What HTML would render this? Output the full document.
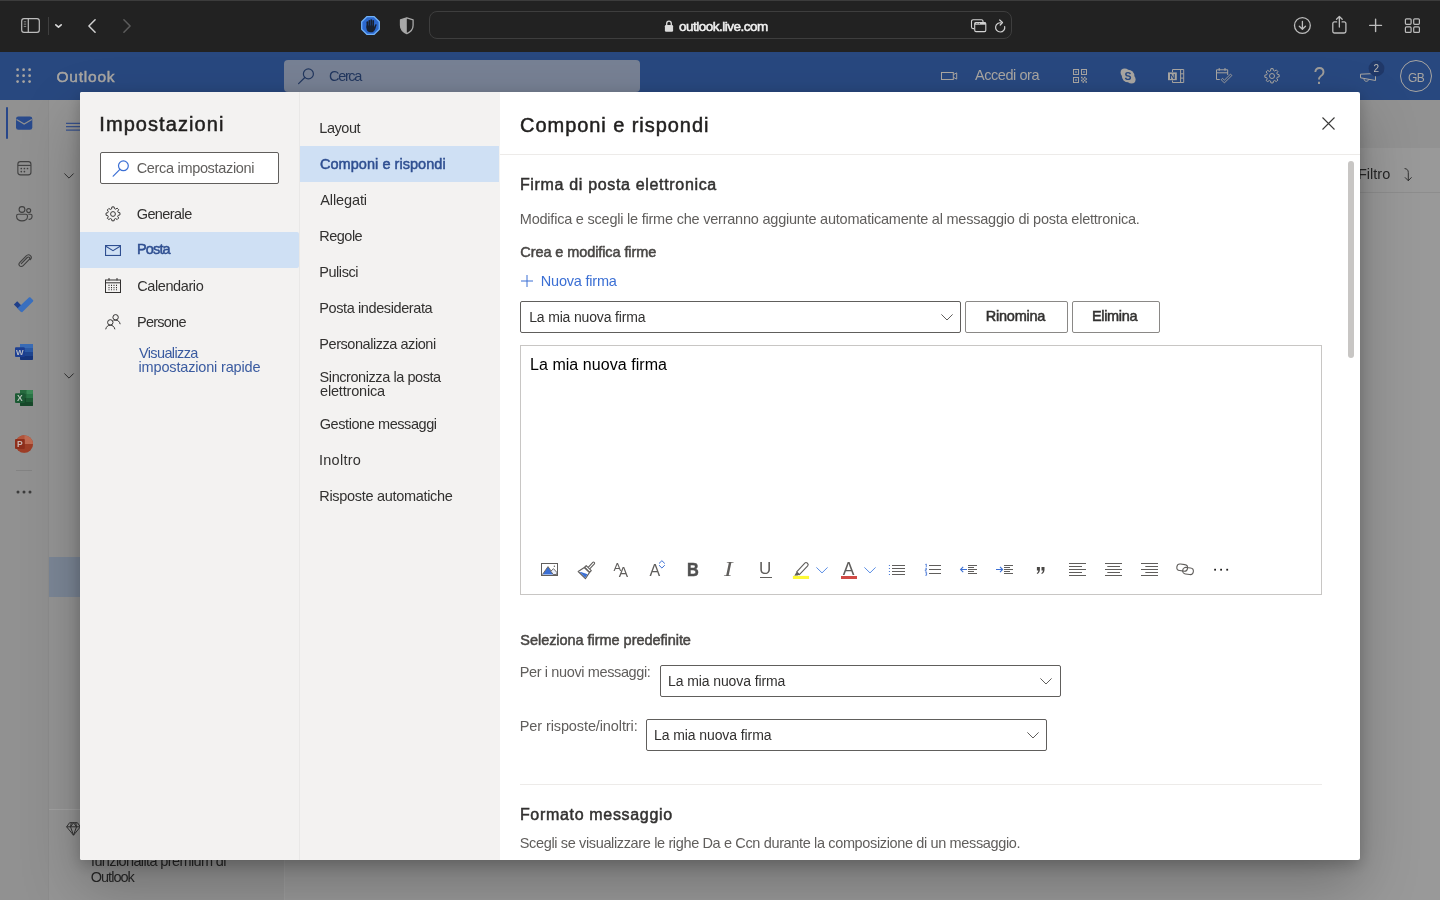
<!DOCTYPE html>
<html lang="it">
<head>
<meta charset="utf-8">
<title>Impostazioni - Outlook</title>
<style>
*{box-sizing:border-box;margin:0;padding:0}
html,body{width:1440px;height:900px;overflow:hidden;background:#999;font-family:"Liberation Sans",sans-serif;color:#201f1e}
body{position:relative}
.a{position:absolute}
svg{position:absolute;overflow:visible}
.t{position:absolute;white-space:nowrap;font-size:14.5px;line-height:20px;color:#323130}
.b{font-weight:normal;-webkit-text-stroke:0.5px}
.hd{color:#a9a6a2}
#safari{left:0;top:0;width:1440px;height:52px;background:#222}
#ohead{left:0;top:52px;width:1440px;height:48px;background:#28487f}
#osearch{left:284px;top:60px;width:356px;height:32px;background:#778194;border-radius:4px}
#rail{left:0;top:100px;width:48px;height:800px;background:#919191}
#fpane{left:48px;top:100px;width:237px;height:800px;background:#959595;border-left:1px solid #8d8d8d;border-right:1px solid #9e9e9e}
#cmdbar{left:285px;top:100px;width:1155px;height:48px;background:#929292}
#mlist{left:285px;top:148px;width:1155px;height:752px;background:#999}
#modal{left:80px;top:92px;width:1280px;height:768px;background:#fff;border-radius:2px;box-shadow:0 25.6px 57.6px rgba(0,0,0,.25),0 4.8px 14.4px rgba(0,0,0,.21)}
#p1{left:80px;top:92px;width:220px;height:768px;background:#f3f2f1;border-right:1px solid #e9e8e7;border-radius:2px 0 0 2px}
#p2{left:300px;top:92px;width:200px;height:768px;background:#f3f2f1}
.sel{background:#cfe0f4}
.box{background:#fff;border:1px solid #605e5c;border-radius:2px}
.btn{background:#fff;border:1px solid #8a8886;border-radius:2px}
</style>
</head>
<body>
<div id="root" style="position:absolute;left:0;top:0;width:1440px;height:900px;will-change:transform">
<!-- ===== SAFARI TOOLBAR ===== -->
<div class="a" id="safari"></div>
<div class="a" style="left:0;top:0;width:1440px;height:1px;background:#3c3c3c"></div>
<!-- sidebar toggle -->
<svg style="left:21px;top:18px" width="19" height="15" viewBox="0 0 19 15" fill="none" stroke="#bdbdbd" stroke-width="1.200"><rect x=".7" y=".7" width="17.600" height="13.600" rx="2.300"/><path d="M7.300 .8V14.200"/><path d="M2.800 3.800H5.200M2.800 6.100H5.200M2.800 8.400H5.200" stroke-width="1" stroke="#8e8e8e"/></svg>
<div class="a" style="left:48px;top:17px;width:1px;height:18px;background:#3f3f3f"></div>
<svg style="left:55px;top:24px" width="7" height="4" viewBox="0 0 7 4" fill="none" stroke="#dadada" stroke-width="1.600" stroke-linecap="round" stroke-linejoin="round"><path d="M.8 .8L3.500 3.200L6.200 .8"/></svg>
<svg style="left:88px;top:19px" width="8" height="14" viewBox="0 0 8 14" fill="none" stroke="#d0d0d0" stroke-width="1.500" stroke-linecap="round" stroke-linejoin="round"><path d="M7.100 .8L.9 7L7.100 13.200"/></svg>
<svg style="left:123px;top:19px" width="8" height="14" viewBox="0 0 8 14" fill="none" stroke="#5c5c5c" stroke-width="1.500" stroke-linecap="round" stroke-linejoin="round"><path d="M.9 .8L7.100 7L.9 13.200"/></svg>
<!-- adblock hand -->
<svg style="left:361px;top:16px" width="19" height="19" viewBox="0 0 19 19"><path d="M5.800 .7H13.200L18.300 5.800V13.200L13.200 18.300H5.800L.7 13.200V5.800Z" fill="#2c69cf" stroke="#6fb0f8" stroke-width="1.300" stroke-linejoin="round"/><g fill="#18202e"><rect x="5.500" y="5.300" width="1.700" height="7" rx=".85"/><rect x="7.450" y="3.900" width="1.700" height="8" rx=".85"/><rect x="9.400" y="3.200" width="1.700" height="8" rx=".85"/><rect x="11.350" y="4.100" width="1.700" height="8" rx=".85"/><path d="M5.500 9.600H13.050V11.300L14.300 8.600C14.700 7.700 15.900 8.200 15.600 9.100L14.300 12.900C13.600 14.900 12.100 16.300 9.700 16.300 7.200 16.300 5.500 14.700 5.500 12.400Z"/></g></svg>
<!-- shield -->
<svg style="left:399px;top:17px" width="15" height="18" viewBox="0 0 15 18"><path d="M7.800 .8L14.100 2.900V8.300C14.100 12.300 11.600 15 7.800 16.700 4 15 1.500 12.300 1.500 8.300V2.900Z" fill="none" stroke="#a8a8a8" stroke-width="1.300" stroke-linejoin="round"/><path d="M7.800 .8L1.500 2.900V8.300C1.500 12.300 4 15 7.800 16.700Z" fill="#a8a8a8"/></svg>
<!-- url field -->
<div class="a" style="left:429px;top:11px;width:583px;height:28px;border:1px solid #3e3e3e;border-radius:8px"></div>
<svg style="left:664px;top:20px" width="10" height="12" viewBox="0 0 10 12"><rect x=".9" y="5" width="8.200" height="6.800" rx="1.200" fill="#dcdcdc"/><path d="M2.700 5.500V3.500a2.300 2.300 0 0 1 4.600 0V5.500" fill="none" stroke="#dcdcdc" stroke-width="1.300"/></svg>
<div class="t b" id="u1" style="left:679px;top:17px;font-size:13.5px;color:#f2f2f2;letter-spacing:-0.5px">outlook.live.com</div>
<svg style="left:970px;top:19px" width="17" height="14" viewBox="0 0 17 14" fill="none" stroke="#d2d2d2" stroke-width="1.100"><path d="M4 9.600H3A1.500 1.500 0 0 1 1.500 8.100V2.300A1.500 1.500 0 0 1 3 .8H11.500A1.500 1.500 0 0 1 13 2.300V3"/><rect x="4.700" y="3.500" width="11.100" height="9.100" rx="1.300"/><path d="M4.700 4.600H15.800" stroke-width="2.200"/><path d="M6.300 4.500h.01M7.900 4.500h.01M9.500 4.500h.01" stroke="#555" stroke-width="1" stroke-linecap="round"/></svg>
<svg style="left:993px;top:19px" width="14" height="15" viewBox="0 0 14 15" fill="none" stroke="#d2d2d2" stroke-width="1.200" stroke-linecap="round" stroke-linejoin="round"><path d="M11.700 7.500A4.600 4.600 0 1 1 8.600 4"/><path d="M6.700 1L9.500 3.500L7.200 6"/></svg>
<!-- right controls -->
<svg style="left:1293px;top:16px" width="19" height="19" viewBox="0 0 19 19" fill="none" stroke="#bcbcbc" stroke-width="1.300" stroke-linecap="round" stroke-linejoin="round"><circle cx="9.400" cy="9.500" r="7.900"/><path d="M9.400 5.500V13.200M6.300 10.200L9.400 13.300L12.500 10.200"/></svg>
<svg style="left:1331px;top:14px" width="17" height="21" viewBox="0 0 17 21" fill="none" stroke="#bcbcbc" stroke-width="1.300" stroke-linecap="round" stroke-linejoin="round"><path d="M5.600 7.900H3.500A1.700 1.700 0 0 0 1.800 9.600V17.300A1.700 1.700 0 0 0 3.500 19H13.200A1.700 1.700 0 0 0 14.900 17.300V9.600A1.700 1.700 0 0 0 13.200 7.900H11.100"/><path d="M8.350 13V2.700M5.500 5.300L8.350 2.500L11.200 5.300"/></svg>
<svg style="left:1369px;top:18px" width="14" height="15" viewBox="0 0 14 15" fill="none" stroke="#bcbcbc" stroke-width="1.400" stroke-linecap="round"><path d="M6.600 1.200V13.600M.7 7.400H12.500"/></svg>
<svg style="left:1404px;top:18px" width="17" height="16" viewBox="0 0 17 16" fill="none" stroke="#bcbcbc" stroke-width="1.200"><rect x="1.400" y=".8" width="5.700" height="5.500" rx="1"/><rect x="9.700" y=".8" width="5.700" height="5.500" rx="1"/><rect x="1.400" y="8.900" width="5.700" height="5.500" rx="1"/><rect x="9.700" y="8.900" width="5.700" height="5.500" rx="1"/></svg>
<!--SAFARI-->
<!-- ===== OUTLOOK HEADER ===== -->
<div class="a" id="ohead"></div>
<div class="a" id="osearch"></div>
<!-- waffle -->
<svg style="left:16px;top:68px" width="16" height="16" viewBox="0 0 16 16" fill="#a9a6a2"><circle cx="1.600" cy="1.700" r="1.350"/><circle cx="7.600" cy="1.700" r="1.350"/><circle cx="13.600" cy="1.700" r="1.350"/><circle cx="1.600" cy="7.700" r="1.350"/><circle cx="7.600" cy="7.700" r="1.350"/><circle cx="13.600" cy="7.700" r="1.350"/><circle cx="1.600" cy="13.600" r="1.350"/><circle cx="7.600" cy="13.600" r="1.350"/><circle cx="13.600" cy="13.600" r="1.350"/></svg>
<div class="t b hd" id="h1" style="left:56.4px;top:67px;font-size:15.5px;letter-spacing:0.8px">Outlook</div>
<svg style="left:298px;top:68px" width="17" height="17" viewBox="0 0 17 17" fill="none" stroke="#22375f" stroke-width="1.200"><circle cx="10.400" cy="5.900" r="5"/><path d="M6.800 9.500L.6 15.700" stroke-linecap="round"/></svg>
<div class="t" id="h2" style="left:329px;top:66px;color:#22375f;letter-spacing:-1.33px">Cerca</div>
<!-- meet now -->
<svg style="left:941px;top:72px" width="17" height="8" viewBox="0 0 17 8" fill="none" stroke="#a9a6a2" stroke-width="1"><rect x=".5" y=".5" width="11.800" height="7"/><path d="M12.300 2.700L15.700 .9V7.100L12.300 5.300"/></svg>
<div class="t hd" id="h3" style="left:975px;top:65px;letter-spacing:-0.45px">Accedi ora</div>
<!-- qr -->
<svg style="left:1073px;top:69px" width="14" height="14" viewBox="0 0 14 14" fill="none" stroke="#a9a6a2" stroke-width="1"><rect x=".5" y=".5" width="5" height="5"/><rect x="8.500" y=".5" width="5" height="5"/><rect x=".5" y="8.500" width="5" height="5"/><path d="M2.300 3h1.400M10.300 3h1.400M2.300 11h1.400" stroke-width="1.400"/><path d="M8 8.500h1.500M11 8.500h1.500M9.500 10h1.500M12.500 10H14M8 11.500h1.500M11 11.500h1.500M9.500 13h1.500M12.500 13H14" stroke-width="1.300"/></svg>
<!-- skype -->
<svg style="left:1120px;top:68px" width="16" height="16" viewBox="0 0 16 16"><g fill="#a9a6a2"><circle cx="8.100" cy="8" r="6.300"/><circle cx="4.700" cy="4.500" r="4.100"/><circle cx="11.500" cy="11.500" r="4.100"/></g><text x="8.100" y="11.700" text-anchor="middle" font-family="Liberation Sans, sans-serif" font-weight="bold" font-size="10.500" fill="#28487f">S</text></svg>
<!-- onenote -->
<svg style="left:1168px;top:69px" width="17" height="14" viewBox="0 0 17 14"><path d="M4.500 3V.5H15.700V13.500H4.500V11.500" fill="none" stroke="#a9a6a2" stroke-width="1"/><path d="M12.600 .5V13.500M12.600 4.800H15.700M12.600 9.100H15.700" fill="none" stroke="#a9a6a2" stroke-width="1"/><rect x="0" y="3.400" width="8.800" height="7.800" fill="#a9a6a2"/><text x="4.400" y="10.200" text-anchor="middle" font-family="Liberation Sans, sans-serif" font-weight="bold" font-size="8" fill="#28487f">N</text></svg>
<!-- my day -->
<svg style="left:1216px;top:68px" width="17" height="16" viewBox="0 0 17 16" fill="none" stroke="#a9a6a2" stroke-width="1"><path d="M3.800 11.500H.5V1.800H11.700V7"/><path d="M.5 4.800H11.700M3.200 0V2.800M9 0V2.800"/><path d="M5.200 11.700L8.400 14.900L15.900 7.500L14.500 6.100L8.400 12.200L6.600 10.300Z" stroke-linejoin="round" stroke-width=".9"/></svg>
<!-- settings gear -->
<svg style="left:1264px;top:68px" width="16" height="16" viewBox="0 0 16 16" fill="none" stroke="#a9a6a2" stroke-width="1"><circle cx="8" cy="8" r="2.500"/><path d="M6.900 .6h2.200l.35 1.900 1.250.52 1.600-1.100 1.550 1.550-1.100 1.600.52 1.250 1.900.35v2.200l-1.900.35-.52 1.250 1.100 1.600-1.550 1.550-1.600-1.100-1.250.52-.35 1.900H6.900l-.35-1.900-1.250-.52-1.600 1.100L2.150 12.500l1.100-1.600-.52-1.250L.83 9.300V7.100l1.900-.35.52-1.250-1.100-1.600L3.700 2.350l1.600 1.100 1.250-.52z" stroke-linejoin="round"/></svg>
<!-- help -->
<div class="t hd" id="h4" style="left:1313.5px;top:65px;font-size:21px;line-height:26px;transform:scaleY(1.1);transform-origin:0 100%;color:#9f9d9a">?</div>
<!-- whats new -->
<svg style="left:1360px;top:73px" width="16" height="9" viewBox="0 0 16 9" fill="none" stroke="#a9a6a2" stroke-width="1" stroke-linejoin="round"><path d="M.5 1.200L15.500 .5V7.500L.5 4.800Z"/><path d="M4 5.600C4 7.300 5 8.300 6.300 8.300S8.500 7.500 8.600 6.500"/></svg>
<svg style="left:1367.5px;top:59.5px" width="17" height="17" viewBox="0 0 17 17"><circle cx="8.500" cy="8.500" r="7.900" fill="#203868"/><text x="8.400" y="11.700" text-anchor="middle" font-family="Liberation Sans, sans-serif" font-size="10" fill="#bdbab6">2</text></svg>
<!-- avatar -->
<div class="a" style="left:1400px;top:60px;width:32px;height:32px;border:1px solid #a9a6a2;border-radius:16px"></div>
<div class="t hd" id="h5" style="left:1408px;top:67.5px;font-size:12px;letter-spacing:-0.7px">GB</div>
<!--OHEAD-->
<!-- ===== DIMMED APP BACKGROUND ===== -->
<div class="a" id="rail"></div>
<div class="a" id="fpane"></div>
<div class="a" id="cmdbar"></div>
<div class="a" id="mlist"></div>
<!-- rail icons -->
<div class="a" style="left:6px;top:107px;width:2px;height:32px;background:#28478a;border-radius:1px"></div>
<svg style="left:16px;top:115.5px" width="17" height="14" viewBox="0 0 17 14"><rect x="0" y=".6" width="16.300" height="13.200" rx="2.400" fill="#294a8c"/><path d="M.5 3.600L8.150 8L15.800 3.600" fill="none" stroke="#919191" stroke-width="1.200"/></svg>
<svg style="left:17px;top:161px" width="15" height="15" viewBox="0 0 15 15" fill="none" stroke="#414141" stroke-width="1.100"><rect x=".85" y=".6" width="13.100" height="13.300" rx="2.600"/><path d="M.9 4.400H13.900"/><g fill="#414141" stroke="none"><circle cx="4.300" cy="7.500" r=".85"/><circle cx="7.400" cy="7.500" r=".85"/><circle cx="10.500" cy="7.500" r=".85"/><circle cx="4.300" cy="10.600" r=".85"/><circle cx="7.400" cy="10.600" r=".85"/></g></svg>
<svg style="left:16px;top:206px" width="17" height="16" viewBox="0 0 17 16" fill="none" stroke="#414141" stroke-width="1.100"><circle cx="6" cy="3.500" r="2.900"/><circle cx="12.700" cy="4.600" r="2"/><path d="M2.200 8.300H9.800C10.800 8.300 11.500 9 11.500 10V10.600C11.500 13.300 9 14.900 6 14.900S.6 13.300 .6 10.600V10C.6 9 1.300 8.300 2.200 8.300Z"/><path d="M12.300 8.300H14.500C15.400 8.300 16.100 9 16.100 9.900 16.100 12 14.800 13.400 12.600 13.400"/></svg>
<svg style="left:17px;top:252px" width="15" height="16" viewBox="0 0 15 16" fill="none" stroke="#414141" stroke-width="1.100" stroke-linecap="round"><path d="M4.300 11.600L10.300 5.500C11.800 4 13.700 6 12.300 7.400L6.200 13.600C3.700 16.100 .4 12.800 2.900 10.300L9 4.100C12.200 .9 16 4.700 13.300 7.700"/></svg>
<svg style="left:13px;top:297px" width="22" height="16" viewBox="0 0 22 16"><path d="M.9 7.600L4.200 4.300L11.100 11.200L7.800 14.500Z" fill="#1f3f8a"/><path d="M7.800 14.500L4.600 11.300L15.900 .5C16.400 0 17 0 17.500 .5L20 3C20.400 3.500 20.400 4.100 20 4.500L9.400 15.100C8.900 15.600 8.300 15.300 7.800 14.500Z" fill="#3a70c0"/></svg>
<!-- word -->
<svg style="left:15px;top:344px" width="18" height="16" viewBox="0 0 18 16"><rect x="5" y="0" width="13" height="4" fill="#3a6cb6"/><rect x="5" y="4" width="13" height="4" fill="#2c5aa6"/><rect x="5" y="8" width="13" height="4" fill="#1f4590"/><path d="M5 12H18V15C18 15.600 17.600 16 17 16H6C5.400 16 5 15.600 5 15Z" fill="#16357c"/><path d="M5 0H17C17.600 0 18 .4 18 1V4H5Z" fill="#3a6cb6"/><rect x="0" y="3.200" width="9.800" height="9.800" rx="1" fill="#1d3f92"/><text x="4.900" y="11.100" text-anchor="middle" font-family="Liberation Sans, sans-serif" font-weight="bold" font-size="8" fill="#b9bdc6">W</text></svg>
<!-- excel -->
<svg style="left:15px;top:390px" width="18" height="16" viewBox="0 0 18 16"><path d="M6 0H17C17.600 0 18 .4 18 1V15C18 15.600 17.600 16 17 16H6C5.400 16 5 15.600 5 15V1C5 .4 5.400 0 6 0Z" fill="#2d6f43"/><rect x="5" y="0" width="6.500" height="4" fill="#276b3f"/><rect x="11.500" y="0" width="6.500" height="4" rx=".8" fill="#3c8a57"/><rect x="5" y="4" width="6.500" height="4" fill="#1f5c35"/><rect x="11.500" y="4" width="6.500" height="4" fill="#2b7546"/><rect x="5" y="8" width="6.500" height="4" fill="#17482a"/><rect x="11.500" y="8" width="6.500" height="4" fill="#1f5c35"/><rect x="5" y="12" width="13" height="4" rx=".8" fill="#17482a"/><rect x="0" y="3.200" width="9.800" height="9.800" rx="1" fill="#1c5a34"/><text x="4.900" y="11.100" text-anchor="middle" font-family="Liberation Sans, sans-serif" font-weight="bold" font-size="8.500" fill="#b9c4bc">X</text></svg>
<!-- powerpoint -->
<svg style="left:15px;top:435px" width="18" height="18" viewBox="0 0 18 18"><circle cx="9.200" cy="9" r="8.800" fill="#a5442c"/><path d="M9.200 .2A8.800 8.800 0 0 1 18 9H9.200Z" fill="#bd6a52"/><path d="M9.200 .2A8.800 8.800 0 0 0 1.400 5H9.200Z" fill="#b2553c"/><path d="M.4 9H18A8.800 8.800 0 0 1 .4 9Z" fill="#9a3a24" opacity=".6"/><rect x="0" y="4.100" width="9.800" height="9.800" rx="1" fill="#8e2f1c"/><text x="4.900" y="12" text-anchor="middle" font-family="Liberation Sans, sans-serif" font-weight="bold" font-size="8.500" fill="#c9b8b3">P</text></svg>
<div class="a" style="left:16px;top:470px;width:16px;height:1px;background:#838383"></div>
<svg style="left:16px;top:490px" width="16" height="4" viewBox="0 0 16 4" fill="#3c3c3c"><circle cx="2" cy="2" r="1.500"/><circle cx="8" cy="2" r="1.500"/><circle cx="14" cy="2" r="1.500"/></svg>
<!-- folder pane -->
<svg style="left:66px;top:122px" width="16" height="10" viewBox="0 0 16 10" fill="none" stroke="#39538f" stroke-width="1.200"><path d="M0 1.300H16M0 4.700H16M0 8.100H16"/></svg>
<svg style="left:64px;top:173px" width="10" height="6" viewBox="0 0 10 6" fill="none" stroke="#333" stroke-width="1"><path d="M.4 .5L5 5.100L9.600 .5"/></svg>
<svg style="left:64px;top:373px" width="10" height="6" viewBox="0 0 10 6" fill="none" stroke="#333" stroke-width="1"><path d="M.4 .5L5 5.100L9.600 .5"/></svg>
<div class="a" style="left:49px;top:557px;width:236px;height:40px;background:#7c8797"></div>
<div class="a" style="left:49px;top:809px;width:235px;height:1px;background:#a2a2a2"></div>
<svg style="left:66px;top:822px" width="15" height="14" viewBox="0 0 15 14" fill="none" stroke="#333" stroke-width="1" stroke-linejoin="round"><path d="M3.600 .7H11.400L14.400 4.800L7.500 13.200L.6 4.800Z"/><path d="M.6 4.800H14.400M5.300 .7L4.500 4.800L7.500 13.200L10.500 4.800L9.700 .7M7.500 .7L4.500 4.800M7.500 .7L10.500 4.800"/></svg>
<div class="t" id="g1" style="left:91px;top:853px;color:#262626;line-height:16px;letter-spacing:-0.62px">funzionalità premium di</div>
<div class="t" id="g2" style="left:90.7px;top:869px;color:#262626;line-height:16px;letter-spacing:-0.97px">Outlook</div>
<!-- message list -->
<div class="a" style="left:285px;top:192px;width:1155px;height:1px;background:#8d8d8d"></div>
<div class="t" id="g3" style="left:1358px;top:164px;color:#262626">Filtro</div>
<svg style="left:1403px;top:168px" width="9" height="14" viewBox="0 0 9 14" fill="none" stroke="#303030" stroke-width="1" stroke-linecap="round" stroke-linejoin="round"><path d="M2 .6C4 .8 5.300 2 5.300 4.500V12.600M2.200 9.600L5.300 12.700L8.300 9.600"/></svg>
<!--BG-->
<!-- ===== SETTINGS MODAL ===== -->
<div class="a" id="modal"></div>
<div class="a" id="p1"></div>
<div class="a" id="p2"></div>
<!-- left pane -->
<div class="t b" id="t1" style="left:99.3px;top:110px;font-size:20px;line-height:28px;color:#201f1e;letter-spacing:1.07px">Impostazioni</div>
<div class="a box" style="left:100px;top:152px;width:179px;height:32px"></div>
<svg style="left:112px;top:160px" width="17" height="17" viewBox="0 0 17 17" fill="none" stroke="#3b6fd4" stroke-width="1.2"><circle cx="11.4" cy="5.8" r="4.9"/><path d="M7.9 9.4L1.2 16.2" stroke-linecap="round"/></svg>
<div class="t" id="t2" style="left:136.7px;top:158px;color:#605e5c;letter-spacing:-0.32px">Cerca impostazioni</div>
<svg style="left:105px;top:206px" width="16" height="16" viewBox="0 0 16 16" fill="none" stroke="#3b3a39" stroke-width="1"><circle cx="8" cy="8" r="2.4"/><path d="M6.9 .9h2.2l.35 1.75 1.2.5 1.5-1 1.55 1.55-1 1.5.5 1.2 1.75.35v2.2l-1.75.35-.5 1.2 1 1.5-1.55 1.55-1.5-1-1.2.5-.35 1.75H6.9l-.35-1.75-1.2-.5-1.5 1L2.3 12.3l1-1.5-.5-1.2L1.05 9.250V7.05L2.800 6.700l.5-1.200-1-1.5L3.850 2.450l1.500 1 1.200-.5z" stroke-linejoin="round"/></svg>
<div class="t" id="t3" style="left:136.7px;top:204px;letter-spacing:-0.58px">Generale</div>
<div class="a sel" style="left:80px;top:232px;width:219px;height:36px;border-radius:0 2px 2px 0"></div>
<svg style="left:105px;top:245px" width="16" height="11" viewBox="0 0 16 11" fill="none" stroke="#2f4f91" stroke-width="1.1"><rect x=".55" y=".55" width="14.9" height="9.9"/><path d="M.8 1.2L8 5.600L15.2 1.200"/></svg>
<div class="t b" id="t4" style="left:137px;top:239px;color:#2f4f91;letter-spacing:-0.85px">Posta</div>
<svg style="left:105px;top:278px" width="16" height="15" viewBox="0 0 16 15" fill="none" stroke="#323130" stroke-width="1"><rect x=".5" y="2" width="15" height="12.500"/><path d="M.5 4.800H15.5M4 0V2.500M12 0V2.500" /><path d="M3.500 7.400h1M6 7.400h1M8.500 7.400h1M11 7.400h1M3.500 9.600h1M6 9.600h1M8.500 9.600h1M11 9.600h1M3.500 11.800h1M6 11.800h1M8.500 11.800h1M11 11.800h1" stroke-width="1.1"/></svg>
<div class="t" id="t5" style="left:137.2px;top:276px;letter-spacing:-0.4px">Calendario</div>
<svg style="left:105px;top:314px" width="16" height="16" viewBox="0 0 16 16" fill="none" stroke="#323130" stroke-width="1"><circle cx="10.600" cy="3.300" r="2.700"/><circle cx="5.300" cy="8.400" r="2.700"/><path d="M.700 15.300C1.300 12.600 3 11.200 5.300 11.200S9.300 12.600 9.900 15.300M8.500 6.700C9.200 6.300 9.900 6.100 10.600 6.100 12.900 6.100 14.600 7.500 15.200 10.200"/></svg>
<div class="t" id="t6" style="left:137px;top:312px;letter-spacing:-0.76px">Persone</div>
<div class="t" id="t7" style="left:138.9px;top:346px;line-height:14px;color:#3a5ba0;letter-spacing:-0.61px">Visualizza</div>
<div class="t" id="t8" style="left:138.5px;top:360px;line-height:14px;color:#3a5ba0;letter-spacing:-0.16px">impostazioni rapide</div>
<!--P1-->
<!-- middle pane -->
<div class="a sel" style="left:300px;top:146px;width:199px;height:36px"></div>
<div class="t" id="t9" style="left:319.3px;top:118px;letter-spacing:-0.45px">Layout</div>
<div class="t b" id="t10" style="left:320px;top:154px;color:#2f4f91;letter-spacing:0.04px">Componi e rispondi</div>
<div class="t" id="t11" style="left:320.3px;top:190px;letter-spacing:-0.11px">Allegati</div>
<div class="t" id="t12" style="left:319.3px;top:226px;letter-spacing:-0.52px">Regole</div>
<div class="t" id="t13" style="left:319.3px;top:262px;letter-spacing:-0.46px">Pulisci</div>
<div class="t" id="t14" style="left:319.3px;top:298px;letter-spacing:-0.4px">Posta indesiderata</div>
<div class="t" id="t15" style="left:319.3px;top:334px;letter-spacing:-0.45px">Personalizza azioni</div>
<div class="t" id="t16" style="left:319.6px;top:370px;line-height:14px;letter-spacing:-0.43px">Sincronizza la posta</div>
<div class="t" id="t17" style="left:320px;top:384px;line-height:14px;letter-spacing:-0.18px">elettronica</div>
<div class="t" id="t18" style="left:319.7px;top:414px;letter-spacing:-0.42px">Gestione messaggi</div>
<div class="t" id="t19" style="left:319px;top:450px;letter-spacing:0.26px">Inoltro</div>
<div class="t" id="t20" style="left:319.3px;top:486px;letter-spacing:-0.31px">Risposte automatiche</div>
<!--P2-->
<!-- right pane -->
<div class="t b" id="t21" style="left:520.1px;top:111px;font-size:20px;line-height:28px;color:#201f1e;letter-spacing:0.94px">Componi e rispondi</div>
<svg style="left:1321.5px;top:116.5px" width="13" height="13" viewBox="0 0 13 13" fill="none" stroke="#3b3a39" stroke-width="1.1"><path d="M.5 .5L12.500 12.500M12.500 .5L.5 12.500"/></svg>
<div class="a" style="left:500px;top:154px;width:860px;height:1px;background:#edebe9"></div>
<div class="a" style="left:1348px;top:161px;width:6px;height:197px;background:#c8c6c4;border-radius:3px"></div>
<div class="t b" id="t22" style="left:519.9px;top:174px;font-size:16px;line-height:22px;color:#323130;letter-spacing:0.67px">Firma di posta elettronica</div>
<div class="t" id="t23" style="left:519.8px;top:209px;color:#605e5c;letter-spacing:-0.22px">Modifica e scegli le firme che verranno aggiunte automaticamente al messaggio di posta elettronica.</div>
<div class="t b" id="t24" style="left:520.3px;top:242px;color:#484644;letter-spacing:-0.09px">Crea e modifica firme</div>
<svg style="left:521px;top:275px" width="12" height="12" viewBox="0 0 12 12" fill="none" stroke="#3b6fd4" stroke-width="1"><path d="M6 0V12M0 6H12"/></svg>
<div class="t" id="t25" style="left:540.8px;top:271px;color:#3b6fd4;letter-spacing:-0.21px">Nuova firma</div>
<div class="a box" style="left:520px;top:301px;width:441px;height:32px"></div>
<div class="t" id="t26" style="left:529.2px;top:307px;font-size:14px;letter-spacing:-0.16px">La mia nuova firma</div>
<svg style="left:941px;top:314px" width="12" height="7" viewBox="0 0 12 7" fill="none" stroke="#605e5c" stroke-width="1"><path d="M.4 .4L6 6L11.600 .4"/></svg>
<div class="a btn" style="left:965px;top:301px;width:103px;height:32px"></div>
<div class="t b" id="t27" style="left:985.7px;top:306px;letter-spacing:-0.22px">Rinomina</div>
<div class="a btn" style="left:1072px;top:301px;width:88px;height:32px"></div>
<div class="t b" id="t28" style="left:1092px;top:306px;letter-spacing:-0.34px">Elimina</div>
<div class="a" style="left:520px;top:345px;width:802px;height:250px;border:1px solid #c8c6c4;background:#fff"></div>
<div class="t" id="t29" style="left:530px;top:355px;font-size:16px;color:#000;letter-spacing:0.05px">La mia nuova firma</div>
<!-- editor toolbar -->
<svg style="left:541px;top:563px" width="17" height="13" viewBox="0 0 17 13"><rect x=".5" y=".5" width="16" height="12" fill="#fff" stroke="#605e5c" stroke-width="1"/><path d="M1.500 11.500L7 3.800L12.400 11.500Z" fill="#3b6fd4"/><path d="M1.300 11.700L7 3.600L10 7.900" fill="none" stroke="#605e5c" stroke-width=".9"/><path d="M9.800 8.200L12.500 5.700L15.800 9.300V11.500H12.200Z" fill="#e9eefb" stroke="#605e5c" stroke-width=".9" stroke-linejoin="round"/><circle cx="13.400" cy="3.300" r=".7" fill="#605e5c"/></svg>
<svg style="left:577px;top:561px" width="19" height="19" viewBox="0 0 19 19" fill="none" stroke="#605e5c" stroke-width="1.100" stroke-linejoin="round"><path d="M11.200 6.300L15.800 1.300C16.700 .5 18.200 1.900 17.400 2.900L12.700 7.800"/><path d="M9.200 4.600L14.300 9.700L12.700 11.300L7.600 6.200Z" fill="#fff"/><path d="M7.300 6.500L12.400 11.600L8.400 17.700L1.200 10.500Z" fill="#fff"/><path d="M4 10.900L10.600 13.300L8.300 16.700L2.700 11.100Z" fill="#3b6fd4" stroke="none"/></svg>
<div class="t" style="left:613.5px;top:557px;font-size:11.500px;color:#605e5c">A</div>
<div class="t" style="left:618.800px;top:561.500px;font-size:14px;color:#605e5c">A</div>
<div class="t" style="left:649.600px;top:561px;font-size:16px;color:#605e5c">A</div>
<svg style="left:658px;top:560px" width="8" height="9" viewBox="0 0 8 9" fill="none" stroke="#3b6fd4" stroke-width="1"><path d="M1 3.500L3.900 .7L6.800 3.500M1 5.200L3.900 8L6.800 5.200"/></svg>
<div class="t b" style="left:686.8px;top:557.5px;font-size:19px;line-height:24px;color:#505050;font-weight:bold;transform:scaleX(.86);transform-origin:0 0">B</div>
<div class="t" style="left:724px;top:556px;font-size:20px;line-height:26px;font-family:'Liberation Serif',serif;font-style:italic;transform:scaleX(1.3);transform-origin:0 0;color:#605e5c">I</div>
<div class="t" style="left:759px;top:557px;font-size:17px;line-height:24px;color:#605e5c">U</div>
<div class="a" style="left:760px;top:577px;width:11.500px;height:1px;background:#605e5c"></div>
<svg style="left:792px;top:561px" width="18" height="19" viewBox="0 0 18 19"><path d="M4.700 10.900L12.800 2.100C14.400 .5 17.300 3.200 15.700 4.900L7.400 13.600Z" fill="#fff" stroke="#605e5c" stroke-width="1.100" stroke-linejoin="round"/><path d="M4.700 10.900L7.400 13.600L5.800 14.500L2.300 14.700L3.600 12.500Z" fill="#605e5c"/><rect x=".9" y="14.900" width="16.200" height="3.100" fill="#fdf935"/></svg>
<svg style="left:816px;top:567px" width="12" height="7" viewBox="0 0 12 7" fill="none" stroke="#5a8ee6" stroke-width="1"><path d="M.4 .4L6 5.900L11.600 .4"/></svg>
<div class="t" style="left:842.800px;top:557px;font-size:17.500px;line-height:24px;color:#605e5c">A</div>
<div class="a" style="left:841px;top:576px;width:16px;height:3px;background:#d04a45"></div>
<svg style="left:864px;top:567px" width="12" height="7" viewBox="0 0 12 7" fill="none" stroke="#5a8ee6" stroke-width="1"><path d="M.4 .4L6 5.900L11.600 .4"/></svg>
<!-- bullets -->
<svg style="left:888px;top:564px" width="18" height="12" viewBox="0 0 18 12" fill="none" stroke="#605e5c" stroke-width="1"><path d="M4 1.500H17M4 4.500H17M4 7.500H17M4 10.500H17"/><path d="M.9 1.500h1M.9 4.500h1M.9 7.500h1M.9 10.500h1" stroke="#3b6fd4"/></svg>
<!-- numbering -->
<svg style="left:924px;top:563px" width="18" height="13" viewBox="0 0 18 13" fill="none" stroke="#605e5c" stroke-width="1"><path d="M5 2.500H17M5 6.500H17M5 10.500H17"/><path d="M1.300 1.500L2.300 1V4.200M1.300 5.300H2.500V6.700H1.300V8.100H2.700M1.300 9.300H2.600V10.800H1.700M2.600 10.800V12.300H1.300" stroke="#3b6fd4" stroke-width=".8"/></svg>
<!-- outdent -->
<svg style="left:960px;top:564px" width="18" height="12" viewBox="0 0 18 12" fill="none" stroke="#605e5c" stroke-width="1"><path d="M8 1.500H17M8 3.500H14M8 5.500H17M8 7.500H14M8 9.500H17"/><path d="M7 5.500H.6M3.200 2.900L.6 5.500L3.200 8.100" stroke="#3b6fd4" stroke-width="1.100"/></svg>
<!-- indent -->
<svg style="left:996px;top:564px" width="18" height="12" viewBox="0 0 18 12" fill="none" stroke="#605e5c" stroke-width="1"><path d="M8 1.500H17M8 3.500H14M8 5.500H17M8 7.500H14M8 9.500H17"/><path d="M0 5.500H6.600M4 2.900L6.600 5.500L4 8.100" stroke="#3b6fd4" stroke-width="1.100"/></svg>
<!-- quote -->
<svg style="left:1036px;top:567px" width="10" height="8" viewBox="0 0 10 8" fill="#484644"><path d="M.9 .1H3.900V2.600C3.900 4.900 3.100 6.200 1.200 6.900L.7 6C1.700 5.500 2.200 4.700 2.300 3.400H.9Z"/><path d="M5.500 .1H8.500V2.600C8.500 4.900 7.700 6.200 5.800 6.900L5.300 6C6.300 5.500 6.800 4.700 6.900 3.400H5.500Z"/></svg>
<!-- align left / center / right -->
<svg style="left:1069px;top:562px" width="18" height="15" viewBox="0 0 18 15" fill="none" stroke="#605e5c" stroke-width="1"><path d="M0 1.500H17M0 4.500H13M0 7.500H17M0 10.500H13M0 13.500H17"/></svg>
<svg style="left:1105px;top:562px" width="18" height="15" viewBox="0 0 18 15" fill="none" stroke="#605e5c" stroke-width="1"><path d="M0 1.500H17M2.300 4.500H15M0 7.500H17M2.300 10.500H15M0 13.500H17"/></svg>
<svg style="left:1141px;top:562px" width="18" height="15" viewBox="0 0 18 15" fill="none" stroke="#605e5c" stroke-width="1"><path d="M0 1.500H17M4.300 4.500H17M0 7.500H17M4.300 10.500H17M0 13.500H17"/></svg>
<!-- link -->
<svg style="left:1176px;top:563px" width="19" height="13" viewBox="0 0 19 13" fill="none" stroke="#605e5c" stroke-width="1.100"><rect x=".8" y="1.300" width="10.800" height="6.600" rx="3.300" transform="rotate(8 6.200 4.600)"/><rect x="6.600" y="4.700" width="10.800" height="6.600" rx="3.300" transform="rotate(8 12 8)"/></svg>
<!-- more -->
<svg style="left:1214px;top:568px" width="15" height="3" viewBox="0 0 15 3" fill="#201f1e"><rect x=".2" y=".8" width="1.800" height="1.800"/><rect x="6.200" y=".8" width="1.800" height="1.800"/><rect x="12.300" y=".8" width="1.800" height="1.800"/></svg>
<!--TOOLBAR-->
<div class="t b" id="t30" style="left:520.3px;top:630px;color:#484644;letter-spacing:-0.04px">Seleziona firme predefinite</div>
<div class="t" id="t31" style="left:519.8px;top:662px;color:#605e5c;letter-spacing:-0.38px">Per i nuovi messaggi:</div>
<div class="a box" style="left:660px;top:665px;width:401px;height:32px"></div>
<div class="t" id="t32" style="left:668px;top:671px;font-size:14px;letter-spacing:-0.1px">La mia nuova firma</div>
<svg style="left:1040px;top:678px" width="12" height="7" viewBox="0 0 12 7" fill="none" stroke="#605e5c" stroke-width="1"><path d="M.4 .4L6 6L11.600 .4"/></svg>
<div class="t" id="t33" style="left:519.8px;top:716px;color:#605e5c;letter-spacing:-0.11px">Per risposte/inoltri:</div>
<div class="a box" style="left:646px;top:719px;width:401px;height:32px"></div>
<div class="t" id="t34" style="left:654px;top:725px;font-size:14px;letter-spacing:-0.09px">La mia nuova firma</div>
<svg style="left:1027px;top:732px" width="12" height="7" viewBox="0 0 12 7" fill="none" stroke="#605e5c" stroke-width="1"><path d="M.4 .4L6 6L11.600 .4"/></svg>
<div class="a" style="left:520px;top:784px;width:802px;height:1px;background:#edebe9"></div>
<div class="t b" id="t35" style="left:519.9px;top:804px;font-size:16px;line-height:22px;color:#323130;letter-spacing:0.68px">Formato messaggio</div>
<div class="t" id="t36" style="left:519.8px;top:833px;color:#605e5c;letter-spacing:-0.36px">Scegli se visualizzare le righe Da e Ccn durante la composizione di un messaggio.</div>
<!--P3-->
</div>
</body>
</html>
